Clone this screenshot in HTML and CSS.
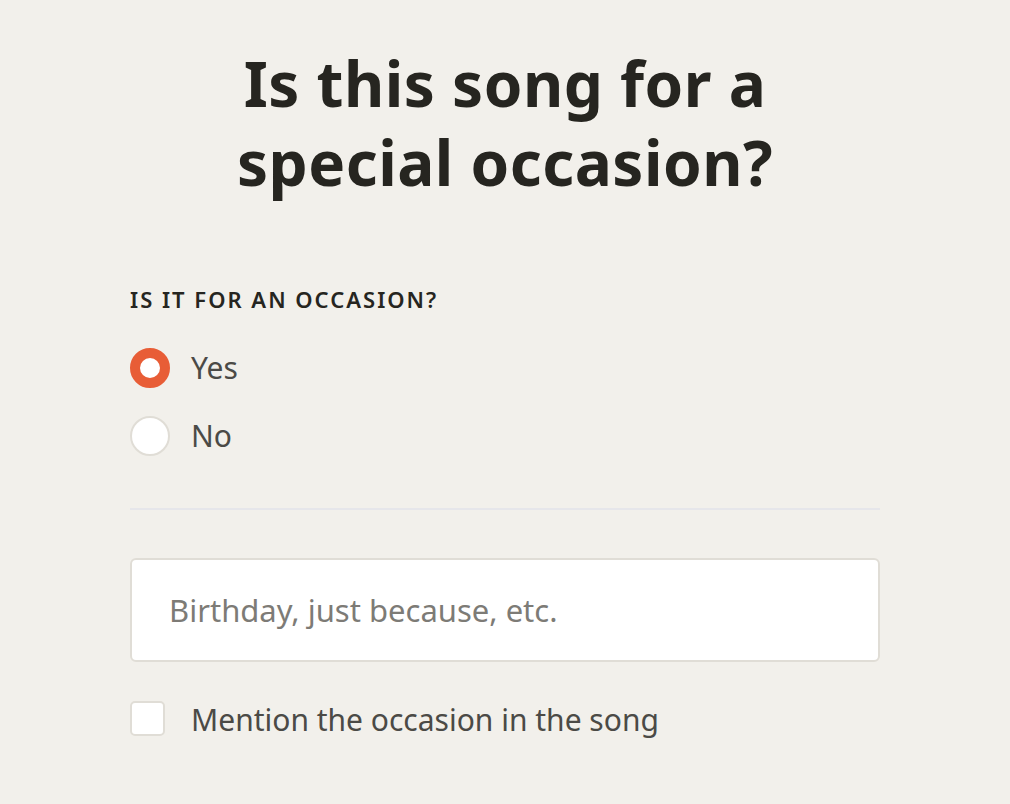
FILE: index.html
```html
<!DOCTYPE html>
<html>
<head>
<meta charset="utf-8">
<link rel="stylesheet" href="styles.css">
</head>
<body>
<main class="page">
  <h1 class="title">Is this song for a<br>special occasion?</h1>
  <section class="field">
    <div class="label">IS IT FOR AN OCCASION?</div>
    <div class="options">
      <label class="option"><span class="radio checked"></span><span class="opt-text">Yes</span></label>
      <label class="option"><span class="radio"></span><span class="opt-text">No</span></label>
    </div>
  </section>
  <hr class="divider">
  <div class="input"><span class="placeholder">Birthday, just because, etc.</span></div>
  <label class="check-row"><span class="checkbox"></span><span class="opt-text check-text">Mention the occasion in the song</span></label>
</main>
</body>
</html>
```
FILE: styles.css
```css
html, body {
  margin: 0;
  padding: 0;
  background: #f2f0eb;
  font-family: "Noto Sans", "Liberation Sans", sans-serif;
}
.page {
  width: 750px;
  margin: 0 auto;
  padding-top: 44px;
}
.title {
  margin: 0;
  text-align: center;
  font-size: 62px;
  line-height: 79px;
  font-weight: 700;
  color: #262520;
  letter-spacing: 0.5px;
}
.field {
  margin-top: 85px;
}
.label {
  font-size: 22px;
  font-weight: 600;
  letter-spacing: 2px;
  color: #262520;
  line-height: 24px;
}
.options {
  margin-top: 37px;
  display: flex;
  flex-direction: column;
  gap: 28px;
}
.option, .check-row {
  display: flex;
  align-items: center;
  gap: 21px;
}
.radio {
  width: 40px;
  height: 40px;
  flex: none;
  box-sizing: border-box;
  border-radius: 50%;
  background: #fff;
  border: 2px solid #e0ddd6;
}
.radio.checked {
  border: 10px solid #e85d36;
}
.opt-text {
  font-size: 30px;
  color: #4b4a46;
  line-height: 40px;
}
.check-text {
  padding-top: 4px;
}
.divider {
  margin: 52px 0 0;
  border: 0;
  height: 2px;
  background: #e6e6ea;
}
.input {
  margin-top: 48px;
  height: 104px;
  box-sizing: border-box;
  background: #fff;
  border: 2px solid #e0ddd6;
  border-radius: 6px;
  display: flex;
  align-items: center;
  padding-left: 37px;
}
.placeholder {
  font-size: 31px;
  color: #7d7b76;
}
.check-row {
  margin-top: 34px;
  gap: 26px;
}
.checkbox {
  width: 35px;
  height: 35px;
  flex: none;
  box-sizing: border-box;
  background: #fff;
  border: 2px solid #e0ddd6;
  border-radius: 5px;
}
```
